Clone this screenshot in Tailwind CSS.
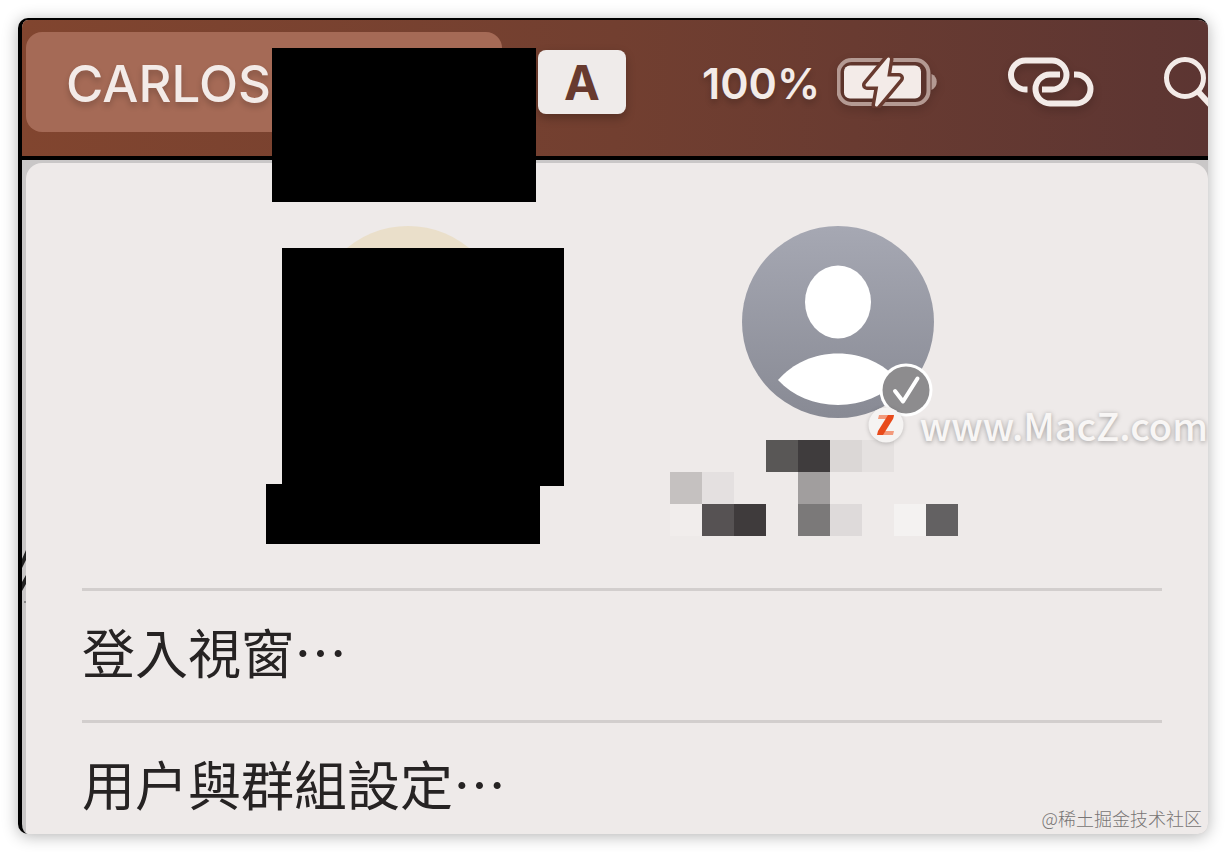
<!DOCTYPE html>
<html lang="zh-Hant">
<head>
    <meta charset="UTF-8">
    <meta name="viewport" content="width=device-width, initial-scale=1.0">
    <title>快速使用者切換</title>
    <script src="https://cdn.jsdelivr.net/npm/@tailwindcss/browser@4"></script>
</head>
<body class="bg-white p-[18px] font-['Inter','Noto_Sans_CJK_TC',sans-serif]">
    <div class="relative overflow-hidden rounded-[10px] border-t-2 border-l-4 border-black bg-[#c9c7c7] shadow-[0_2px_16px_rgba(0,0,0,0.3)]">

        <!-- Menu bar -->
        <header class="flex items-center overflow-hidden border-b-4 border-black bg-linear-to-r from-[#81452f] via-[#723f30] to-[#5c3532] pt-3 pb-6 pl-1 text-[#f3ebe8]">
            <button class="h-[100px] w-[476px] shrink-0 rounded-2xl bg-[#a56a56] pt-0.5 pl-10 text-left text-[51px] leading-none font-medium text-shadow-[0_4px_6px_rgba(0,0,0,0.2)]">CARLOS</button>
            <button class="ml-9 flex h-16 w-[88px] shrink-0 items-center justify-center rounded-lg bg-[#efebea] pt-0.5 text-5xl leading-none font-bold text-[#683a2f] shadow-[0_4px_10px_rgba(0,0,0,0.25)]">A</button>
            <span class="ml-[76px] w-[135px] shrink-0 pt-0.5 text-[43px] leading-none font-semibold text-shadow-[0_4px_6px_rgba(0,0,0,0.2)]">100%</span>
            <!-- Battery -->
            <svg class="h-[52px] w-[100px] shrink-0 drop-shadow-[0_4px_4px_rgba(0,0,0,0.2)]" viewBox="0 0 100 52" fill="none">
                <rect x="1.500" y="4" width="90" height="44" rx="13" stroke="#b49a93" stroke-width="4"/>
                <rect x="7" y="9.500" width="77" height="33" rx="6" fill="#f3ebe8"/>
                <path d="M94.500 18c7 2.500 7 13 0 16z" fill="#b49a93"/>
                <path d="M51.500 3L30 29H43L39.500 49L62 22H48.500Z" stroke="#683a2f" stroke-width="10" stroke-linejoin="round"/>
                <path d="M51.500 3L30 29H43L39.500 49L62 22H48.500Z" fill="#f3ebe8" stroke="#f3ebe8" stroke-width="3" stroke-linejoin="round"/>
            </svg>
            <!-- Linked rings -->
            <svg class="ml-[70px] h-[52px] w-[88px] shrink-0 drop-shadow-[0_4px_4px_rgba(0,0,0,0.2)]" viewBox="0 0 88 52" fill="none" stroke="#f3ebe8" stroke-width="6">
                <path d="M20.500 33.500H18.500A14.500 14.500 0 0 1 18.500 4.500H45A14.500 14.500 0 0 1 45 33.500H35"/>
                <path d="M53 18.500H43A14.500 14.500 0 0 0 43 47.500H69A14.500 14.500 0 0 0 69 18.500H67"/>
            </svg>
            <button class="ml-[68px] shrink-0" aria-label="Search">
                <svg class="h-[52px] w-[60px]" viewBox="0 0 60 52" fill="none" stroke="#f3ebe8" stroke-width="5">
                    <circle cx="22" cy="22" r="18.500"/>
                    <path d="M35 35.500L52 54" stroke-width="6"/>
                </svg>
            </button>
        </header>

        <!-- User switching menu -->
        <main class="mt-[3px] ml-1 rounded-t-2xl bg-[#eeeae9] pt-[63px] pr-[46px] pl-14">
            <div class="flex h-[362px] items-start justify-center gap-[238px] pl-0.5">
                <div class="relative size-48 rounded-full bg-[#eadfca]">
                    <div class="absolute top-[22px] left-[-30px] h-[238px] w-[282px] bg-black"></div>
                    <div class="absolute top-[258px] left-[-46px] h-[60px] w-[274px] bg-black"></div>
                </div>
                <div class="relative size-48">
                    <svg class="size-48" viewBox="0 0 192 192">
                        <defs>
                            <linearGradient id="avatar" x1="0" y1="0" x2="0" y2="1">
                                <stop offset="0" stop-color="#a6a8b3"/>
                                <stop offset="1" stop-color="#888a94"/>
                            </linearGradient>
                        </defs>
                        <circle cx="96" cy="96" r="96" fill="url(#avatar)"/>
                        <ellipse cx="96" cy="76" rx="33" ry="36.500" fill="#fff"/>
                        <path d="M36 154C51 137 72 127.500 96 127.500s45 9.500 60 26.500c-15 16-36 25-60 25s-45-9-60-25z" fill="#fff"/>
                        <circle cx="164" cy="164" r="26.500" fill="#fff"/>
                        <circle cx="164" cy="164" r="23.500" fill="#8d8c8e"/>
                        <path d="M153 165l8 10.500 14.500-23" fill="none" stroke="#fff" stroke-width="4" stroke-linecap="round" stroke-linejoin="round"/>
                    </svg>
                    <!-- Mosaic over the account name -->
                    <div class="absolute top-[214px] left-[-72px] grid w-[288px] grid-cols-9">
                        <div class="col-start-4 h-8 bg-[#595756]"></div>
                        <div class="h-8 bg-[#3f3c3d]"></div>
                        <div class="h-8 bg-[#dbd7d6]"></div>
                        <div class="h-8 bg-[#e5e1e0]"></div>
                        <div class="col-start-1 h-8 bg-[#c5c1c0]"></div>
                        <div class="h-8 bg-[#e4e0e0]"></div>
                        <div class="col-start-5 h-8 bg-[#a19e9e]"></div>
                        <div class="col-start-1 h-8 bg-[#f1edec]"></div>
                        <div class="h-8 bg-[#565253]"></div>
                        <div class="h-8 bg-[#3f3b3c]"></div>
                        <div class="col-start-5 h-8 bg-[#7b7979]"></div>
                        <div class="h-8 bg-[#dedada]"></div>
                        <div class="col-start-8 h-8 bg-[#f4f2f1]"></div>
                        <div class="h-8 bg-[#636162]"></div>
                    </div>
                </div>
            </div>
            <button class="block w-full border-t-[3px] border-[#d2cecd] pt-8 pb-[33px] text-left text-[53px] leading-[64px] text-[#262323]">登入視窗⋯</button>
            <button class="block w-full border-t-[3px] border-[#d2cecd] pt-8 pb-[15px] text-left text-[53px] leading-[64px] text-[#262323]">用户與群組設定⋯</button>
        </main>

        <!-- Redacted user name -->
        <div class="absolute top-7 left-[250px] h-[154px] w-[264px] bg-black"></div>

        <!-- Sliver of the window behind -->
        <svg class="absolute top-[528px] left-0 h-[56px] w-1" viewBox="0 0 4 56" fill="#222">
            <path d="M4 2V12L0 20V11zM4 27V36L0 43V34z"/>
            <path d="M2 53h2v2H2z" fill="#888"/>
        </svg>

        <!-- Watermarks -->
        <div class="absolute top-[379px] right-0 flex items-center gap-4 font-['Noto_Sans_CJK_SC',sans-serif]">
            <svg class="size-9 drop-shadow-[0_1px_2px_rgba(0,0,0,0.2)]" viewBox="0 0 36 36">
                <circle cx="18" cy="18" r="17.500" fill="#f5f3f2"/>
                <path d="M11 8h15l-1 4H10z" fill="#f39a7c"/>
                <path d="M11 24h15l-1 4H10z" fill="#f39a7c"/>
                <path d="M20 8h6l-1 4-10 16H9l1-4z" fill="#e84a1b"/>
            </svg>
            <span class="text-[38px] leading-[52px] font-medium text-[#f8f6f5] text-shadow-[0_1px_5px_rgba(0,0,0,0.35)]">www.MacZ.com</span>
        </div>
        <span class="absolute right-[6px] bottom-1 font-['Noto_Sans_CJK_SC',sans-serif] text-lg leading-6 font-light text-[#777474]" lang="zh-Hans">@稀土掘金技术社区</span>
    </div>
</body>
</html>
